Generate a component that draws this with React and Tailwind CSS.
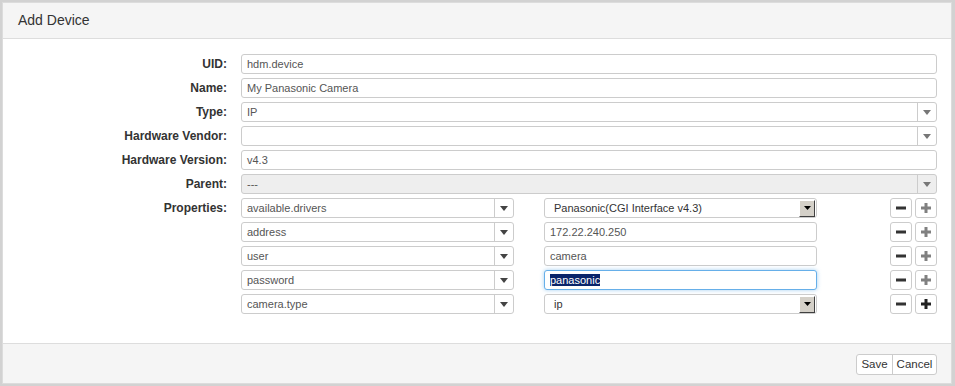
import React from "react";

const font = { fontFamily: '"Liberation Sans", Arial, sans-serif' };

function Caret({ dark }) {
  return (
    <svg width="8" height="5" viewBox="0 0 8 5">
      <path d="M0 0 L8 0 L4 5 Z" fill={dark ? "#444" : "#777"} />
    </svg>
  );
}

function Label({ children }) {
  return (
    <div className="w-[224px] shrink-0 text-right text-[12px] font-bold text-[#333] leading-[20px]">
      {children}
    </div>
  );
}

function TextInput({ value, className = "" }) {
  return (
    <div
      className={
        "h-[20px] border border-[#ccc] rounded-[3px] bg-white px-[5px] text-[11px] leading-[18px] text-[#555] " +
        className
      }
    >
      {value}
    </div>
  );
}

function BsSelect({ value, disabled, dark, className = "" }) {
  return (
    <div
      className={
        "h-[20px] flex border border-[#ccc] rounded-[3px] " +
        (disabled ? "bg-[#eee] " : "bg-white ") +
        className
      }
    >
      <div className="flex-1 px-[5px] text-[11px] leading-[18px] text-[#555]">{value}</div>
      <div className="w-[19px] border-l border-[#ccc] flex items-center justify-center">
        <Caret dark={dark} />
      </div>
    </div>
  );
}

function NativeSelect({ value }) {
  return (
    <div className="h-[20px] w-[273px] flex items-center border border-[#ccc] rounded-[3px] bg-white pl-[9px] pr-[1px]">
      <div className="flex-1 text-[11px] leading-[18px] text-[#333]">{value}</div>
      <div className="w-[16px] h-[17px] bg-[#d4d0c8] border border-t-white border-l-white border-b-[#404040] border-r-[#404040] flex items-center justify-center">
        <svg width="7" height="4" viewBox="0 0 7 4">
          <path d="M0 0 L7 0 L3.5 4 Z" fill="#000" />
        </svg>
      </div>
    </div>
  );
}

function IconBtn({ kind, dark }) {
  const c = kind === "minus" ? "#333" : dark ? "#222" : "#808080";
  return (
    <div className="w-[22px] h-[20px] border border-[#ccc] rounded-[3px] bg-white flex items-center justify-center">
      <svg width="10" height="10" viewBox="0 0 10 10">
        <rect x="0" y="3.5" width="10" height="3" fill={c} />
        {kind === "plus" && <rect x="3.5" y="0" width="3" height="10" fill={c} />}
      </svg>
    </div>
  );
}

const props = [
  { key: "available.drivers", value: "Panasonic(CGI Interface v4.3)", type: "select" },
  { key: "address", value: "172.22.240.250" },
  { key: "user", value: "camera" },
  { key: "password", value: "panasonic", focus: true },
  { key: "camera.type", value: "ip", type: "select", last: true },
];

export default function App() {
  return (
    <div
      className="w-[955px] h-[386px] bg-[#d2d2d2] pt-[2px] pl-[2px] pr-[3px] pb-[2px]"
      style={font}
    >
      <div className="h-full flex flex-col border border-[#dcdcdc] bg-white">
        {/* Header */}
        <div className="h-[36px] shrink-0 bg-[#f5f5f5] border-b border-[#ddd] pl-[15px] flex items-center">
          <span className="text-[14px] text-[#333]">Add Device</span>
        </div>

        {/* Body */}
        <div className="flex-1 pt-[15px] pr-[14px] flex flex-col gap-[4px]">
          <div className="flex gap-[14px]">
            <Label>UID:</Label>
            <TextInput value="hdm.device" className="flex-1" />
          </div>
          <div className="flex gap-[14px]">
            <Label>Name:</Label>
            <TextInput value="My Panasonic Camera" className="flex-1" />
          </div>
          <div className="flex gap-[14px]">
            <Label>Type:</Label>
            <BsSelect value="IP" className="flex-1" />
          </div>
          <div className="flex gap-[14px]">
            <Label>Hardware Vendor:</Label>
            <BsSelect value="" className="flex-1" />
          </div>
          <div className="flex gap-[14px]">
            <Label>Hardware Version:</Label>
            <TextInput value="v4.3" className="flex-1" />
          </div>
          <div className="flex gap-[14px]">
            <Label>Parent:</Label>
            <BsSelect value="---" disabled className="flex-1" />
          </div>

          {props.map((p, i) => (
            <div key={p.key} className="flex gap-[14px]">
              <Label>{i === 0 ? "Properties:" : ""}</Label>
              <div className="flex-1 flex items-center">
                <BsSelect value={p.key} dark className="w-[273px]" />
                <div className="w-[30px]" />
                {p.type === "select" ? (
                  <NativeSelect value={p.value} />
                ) : p.focus ? (
                  <div className="h-[20px] w-[273px] border border-[#66afe9] rounded-[3px] bg-white px-[5px] text-[11px] leading-[18px] shadow-[0_0_4px_rgba(102,175,233,0.6)]">
                    <span className="bg-[#0a246a] text-white">{p.value}</span>
                  </div>
                ) : (
                  <TextInput value={p.value} className="w-[273px]" />
                )}
                <div className="flex-1" />
                <div className="flex gap-[3px]">
                  <IconBtn kind="minus" />
                  <IconBtn kind="plus" dark={p.last} />
                </div>
              </div>
            </div>
          ))}
        </div>

        {/* Footer */}
        <div className="h-[40px] shrink-0 bg-[#f5f5f5] border-t border-[#ddd] pt-[10px] pr-[14px] flex justify-end items-start">
          <div className="flex h-[21px] border border-[#ccc] rounded-[3px] bg-white text-[11.5px] text-[#333]">
            <div className="w-[36px] flex items-center justify-center border-r border-[#ccc]">Save</div>
            <div className="w-[43px] flex items-center justify-center">Cancel</div>
          </div>
        </div>
      </div>
    </div>
  );
}
